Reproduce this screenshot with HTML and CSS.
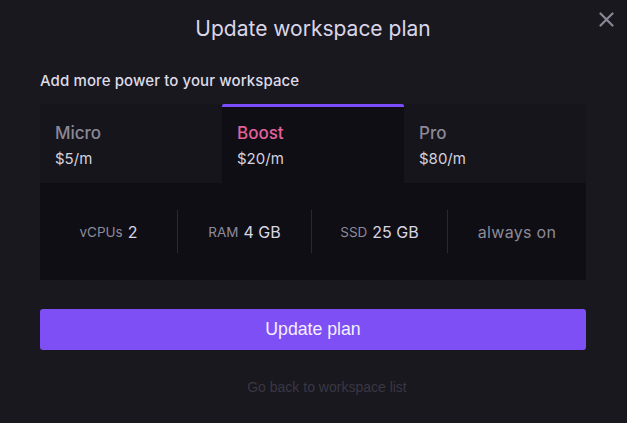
FILE: index.html
```html
<!DOCTYPE html>
<html>
<head>
<meta charset="utf-8">
<link rel="stylesheet" href="styles.css">
</head>
<body>
<div class="modal">
  <button class="close" aria-label="Close">
    <svg width="15" height="15" viewBox="0 0 15 15"><path d="M1.5 1.5 L13.5 13.5 M13.5 1.5 L1.5 13.5" stroke="#8a8796" stroke-width="2.2" stroke-linecap="round"/></svg>
  </button>
  <h1 class="title">Update workspace plan</h1>
  <p class="subtitle">Add more power to your workspace</p>
  <div class="tabs">
    <div class="tab">
      <div class="tab-name">Micro</div>
      <div class="tab-price">$5/m</div>
    </div>
    <div class="tab active">
      <div class="tab-name">Boost</div>
      <div class="tab-price">$20/m</div>
    </div>
    <div class="tab">
      <div class="tab-name">Pro</div>
      <div class="tab-price">$80/m</div>
    </div>
  </div>
  <div class="specs">
    <div class="spec"><span class="label">vCPUs</span> <span class="value">2</span></div>
    <div class="spec"><span class="label">RAM</span> <span class="value">4 GB</span></div>
    <div class="spec"><span class="label">SSD</span> <span class="value">25 GB</span></div>
    <div class="spec"><span class="plain">always on</span></div>
  </div>
  <button class="primary">Update plan</button>
  <a class="back" href="#">Go back to workspace list</a>
</div>
</body>
</html>
```

FILE: styles.css
```css
html, body {
  margin: 0;
  padding: 0;
  background: #19181f;
  height: 100%;
}
body {
  font-family: Inter, "Noto Sans", sans-serif;
}
.modal {
  position: relative;
  padding: 0 41px 0 40px;
  display: flex;
  flex-direction: column;
}
.close {
  position: absolute;
  top: 12px;
  right: 13px;
  width: 15px;
  height: 15px;
  padding: 0;
  border: 0;
  background: none;
  display: block;
}
.close svg { display: block; }
.title {
  margin: 14px 0 0;
  font-size: 21px;
  line-height: 30px;
  font-weight: 400;
  color: #dad6e8;
  text-align: center;
}
.subtitle {
  margin: 27px 0 0;
  font-size: 15px;
  line-height: 20px;
  font-weight: 500;
  letter-spacing: 0.1px;
  color: #dedbe8;
}
.tabs {
  margin-top: 13px;
  display: grid;
  grid-template-columns: repeat(3, 1fr);
}
.tab {
  background: #16151c;
  border-top: 3px solid transparent;
  padding: 16px 15px 14px;
}
.tab.active {
  background: #0f0e14;
  border-top-color: #7c4dff;
  border-radius: 2px 2px 0 0;
}
.tab-name {
  font-size: 17px;
  line-height: 20px;
  font-weight: 500;
  color: #8b8897;
}
.tab.active .tab-name {
  color: #e2609c;
}
.tab-price {
  margin-top: 6px;
  font-size: 15px;
  line-height: 20px;
  color: #d5d2de;
}
.specs {
  background: #0f0e14;
  padding: 27px 0;
  display: grid;
  grid-template-columns: 137fr 134fr 136fr 139fr;
}
.spec {
  height: 43px;
  display: flex;
  align-items: center;
  justify-content: center;
  gap: 5px;
  border-left: 1px solid #2a2833;
}
.spec:first-child {
  border-left: 0;
}
.label {
  font-size: 13.5px;
  color: #8d8a99;
}
.value {
  font-size: 16px;
  color: #d9d6e2;
}
.plain {
  font-size: 16px;
  color: #8d8a99;
  letter-spacing: 0.3px;
}
.primary {
  margin-top: 29px;
  height: 41px;
  border: 0;
  border-radius: 3px;
  background: #7f4ff6;
  color: #f4f0ff;
  font-family: "Liberation Sans", Arial, sans-serif;
  font-size: 17.7px;
  padding: 0;
}
.back {
  margin-top: 28px;
  margin-left: 28px;
  align-self: center;
  font-family: "Liberation Sans", Arial, sans-serif;
  font-size: 14px;
  line-height: 18px;
  color: #393744;
  text-decoration: none;
}
```
